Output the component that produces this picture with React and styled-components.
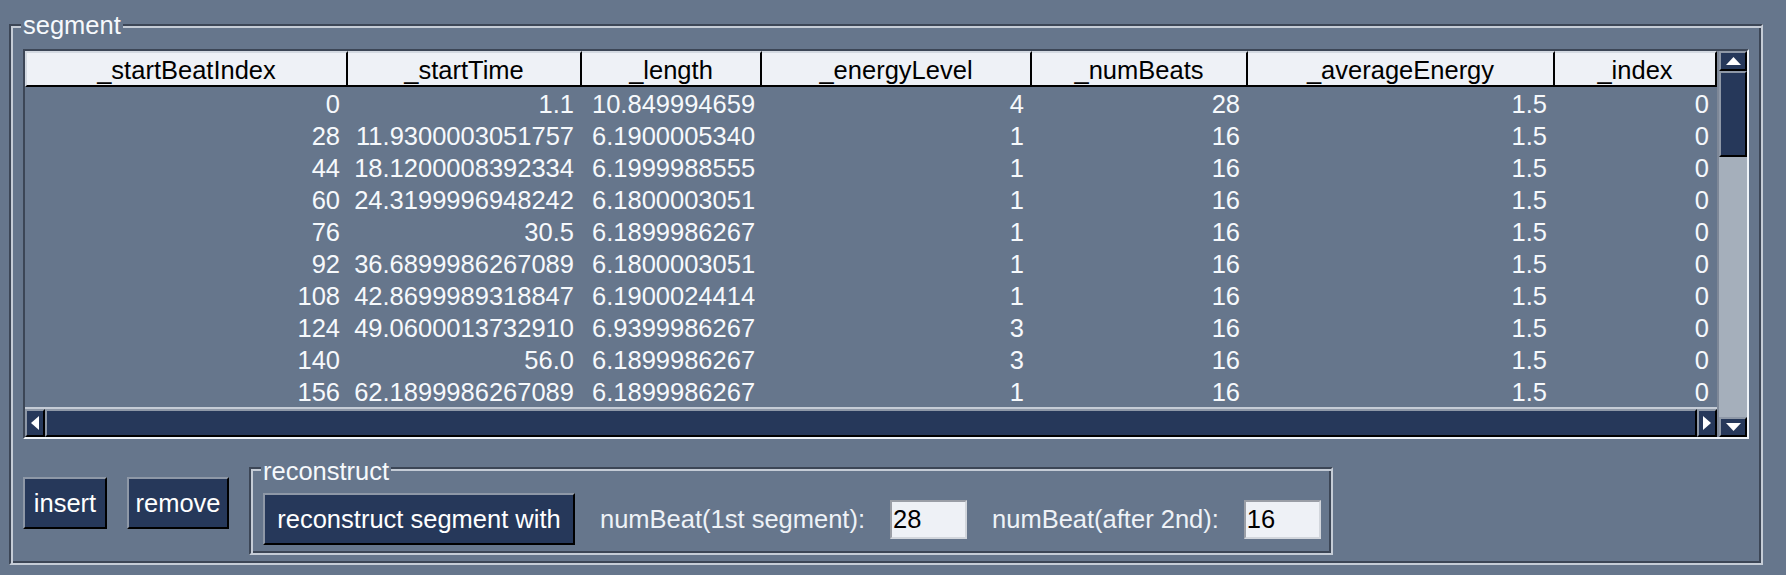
import React from "react";
import styled, { createGlobalStyle } from "styled-components";

const colors = {
  background: "#66768c",
  navy: "#26385a",
  headerBg: "#eef1f6",
  headerEdge: "#d3d9e1",
  trough: "#a5afbb",
  grooveDark: "#3c4656",
  grooveLight: "#c5ccd6",
  frameLight: "#eef3f8",
  raisedLight: "#8e98a7",
  text: "#f6f9fc",
  label: "#eef2f7",
};

const COLUMNS = "323px 234px 180px 270px 216px 307px 162px";

const headers = [
  "_startBeatIndex",
  "_startTime",
  "_length",
  "_energyLevel",
  "_numBeats",
  "_averageEnergy",
  "_index",
];

const rows = [
  ["0", "1.1", "10.8499946594238", "4", "28", "1.5", "0"],
  ["28", "11.9300003051757", "6.1900005340576", "1", "16", "1.5", "0"],
  ["44", "18.1200008392334", "6.1999988555908", "1", "16", "1.5", "0"],
  ["60", "24.3199996948242", "6.1800003051757", "1", "16", "1.5", "0"],
  ["76", "30.5", "6.1899986267089", "1", "16", "1.5", "0"],
  ["92", "36.6899986267089", "6.1800003051757", "1", "16", "1.5", "0"],
  ["108", "42.8699989318847", "6.1900024414062", "1", "16", "1.5", "0"],
  ["124", "49.0600013732910", "6.9399986267089", "3", "16", "1.5", "0"],
  ["140", "56.0", "6.1899986267089", "3", "16", "1.5", "0"],
  ["156", "62.1899986267089", "6.1899986267089", "1", "16", "1.5", "0"],
];

const GlobalStyle = createGlobalStyle`
  html, body {
    margin: 0;
    padding: 0;
    background: ${colors.background};
    overflow: hidden;
  }

  body {
    font-family: "Liberation Sans", Arial, Helvetica, sans-serif;
    font-size: 25.5px;
  }
`;

const Page = styled.div`
  width: 1786px;
  height: 575px;
  box-sizing: border-box;
  padding: 24px 23px 10px 9px;
`;

const Group = styled.div`
  position: relative;
  border: 2px solid;
  border-color: ${colors.grooveDark} ${colors.grooveLight} ${colors.grooveLight} ${colors.grooveDark};
  box-shadow: inset 2px 2px 0 ${colors.grooveLight}, inset -2px -2px 0 ${colors.grooveDark};
  padding: ${(p) => p.$padding};
`;

const Legend = styled.span`
  position: absolute;
  left: 10px;
  top: ${(p) => p.$top}px;
  padding: 0 2px;
  line-height: 30px;
  color: ${colors.text};
  background: ${colors.background};
  white-space: nowrap;
`;

const TableFrame = styled.div`
  display: grid;
  grid-template-columns: 1692px 30px;
  grid-template-rows: 358px 28px;
  border: 2px solid;
  border-color: ${colors.grooveDark} ${colors.frameLight} ${colors.frameLight} ${colors.grooveDark};
`;

const TableArea = styled.div`
  box-sizing: border-box;
  border-bottom: 2px solid ${colors.grooveLight};
  overflow: hidden;
`;

const HeaderRow = styled.div`
  display: grid;
  grid-template-columns: ${COLUMNS};
  height: 36px;
`;

const HeaderCell = styled.div`
  box-sizing: border-box;
  background: ${colors.headerBg};
  border-top: 2px solid ${colors.headerEdge};
  border-bottom: 2px solid #000;
  border-right: 2px solid #000;
  padding-top: 2px;
  line-height: 30px;
  text-align: center;
  color: #000;
  white-space: nowrap;
  overflow: hidden;

  &:first-child {
    border-left: 2px solid ${colors.headerEdge};
  }
`;

const Body = styled.div`
  height: 320px;
`;

const BodyRow = styled.div`
  display: grid;
  grid-template-columns: ${COLUMNS};
  height: 32px;
`;

const Cell = styled.div`
  box-sizing: border-box;
  padding: 2px ${(p) => (p.$clip ? "7px" : "8px")} 0 ${(p) => (p.$clip ? "10px" : "0")};
  line-height: 30px;
  text-align: ${(p) => (p.$clip ? "left" : "right")};
  color: ${colors.text};
  white-space: nowrap;
  overflow: hidden;
`;

const Clip = styled.span`
  display: block;
  overflow: hidden;
`;

const VScroll = styled.div`
  grid-column: 2;
  grid-row: 1 / span 2;
  display: flex;
  flex-direction: column;
  background: ${colors.trough};
  border-left: 2px solid #7e8898;
`;

const HScroll = styled.div`
  grid-column: 1;
  grid-row: 2;
  display: flex;
`;

const Raised = styled.div`
  box-sizing: border-box;
  display: flex;
  align-items: center;
  justify-content: center;
  background: ${colors.navy};
  border: 2px solid;
  border-color: ${colors.raisedLight} #000 #000 ${colors.raisedLight};
  flex: ${(p) => (p.$grow ? "1" : "none")};
  width: ${(p) => (p.$width ? `${p.$width}px` : "auto")};
  height: ${(p) => (p.$height ? `${p.$height}px` : "auto")};
`;

const Trough = styled.div`
  flex: 1;
`;

const BottomRow = styled.div`
  display: flex;
  align-items: flex-start;
  gap: 20px;
  margin-top: 28px;
`;

const Actions = styled.div`
  display: flex;
  gap: 20px;
  padding-top: 10px;
`;

const Button = styled.button`
  box-sizing: border-box;
  width: ${(p) => p.$width}px;
  height: 52px;
  padding: 0;
  background: ${colors.navy};
  color: #fff;
  border: 2px solid;
  border-color: ${colors.raisedLight} #000 #000 ${colors.raisedLight};
  font: inherit;
  line-height: 30px;
  text-align: center;
  white-space: nowrap;
`;

const ReconstructRow = styled.div`
  display: flex;
  align-items: center;
  gap: 25px;
`;

const Label = styled.span`
  color: ${colors.label};
  white-space: nowrap;
`;

const Entry = styled.input`
  box-sizing: border-box;
  width: 77px;
  height: 39px;
  padding: 0 0 0 1px;
  border: 2px solid;
  border-color: #9a9ea6 #d2d6dc #d2d6dc #9a9ea6;
  background: ${colors.headerBg};
  color: #000;
  font: inherit;
  outline: none;
`;

const Arrow = ({ dir }) => {
  const shapes = {
    up: { w: 15, h: 8, points: "7.5,0 15,8 0,8" },
    down: { w: 15, h: 8, points: "0,0 15,0 7.5,8" },
    left: { w: 8, h: 14, points: "8,0 8,14 0,7" },
    right: { w: 8, h: 14, points: "0,0 8,7 0,14" },
  };
  const s = shapes[dir];
  return (
    <svg width={s.w} height={s.h} viewBox={`0 0 ${s.w} ${s.h}`}>
      <polygon points={s.points} fill="#fff" />
    </svg>
  );
};

const App = () => {
  return (
    <>
      <GlobalStyle />
      <Page>
        <Group $padding="23px 12px 8px 12px">
          <Legend $top={-16}>{"segment"}</Legend>
          <TableFrame>
            <TableArea>
              <HeaderRow>
                {headers.map((h) => (
                  <HeaderCell key={h}>{h}</HeaderCell>
                ))}
              </HeaderRow>
              <Body>
                {rows.map((row) => (
                  <BodyRow key={row[0]}>
                    {row.map((value, i) =>
                      i === 2 ? (
                        <Cell key={i} $clip>
                          <Clip>{value}</Clip>
                        </Cell>
                      ) : (
                        <Cell key={i}>{value}</Cell>
                      )
                    )}
                  </BodyRow>
                ))}
              </Body>
            </TableArea>
            <VScroll>
              <Raised $height={20}>
                <Arrow dir="up" />
              </Raised>
              <Raised $height={86} />
              <Trough />
              <Raised $height={20}>
                <Arrow dir="down" />
              </Raised>
            </VScroll>
            <HScroll>
              <Raised $width={20}>
                <Arrow dir="left" />
              </Raised>
              <Raised $grow />
              <Raised $width={20}>
                <Arrow dir="right" />
              </Raised>
            </HScroll>
          </TableFrame>
          <BottomRow>
            <Actions>
              <Button $width={84}>{"insert"}</Button>
              <Button $width={102}>{"remove"}</Button>
            </Actions>
            <Group $padding="24px 10px 8px 12px">
              <Legend $top={-13}>{"reconstruct"}</Legend>
              <ReconstructRow>
                <Button $width={312}>{"reconstruct segment with"}</Button>
                <Label>{"numBeat(1st segment):"}</Label>
                <Entry defaultValue="28" />
                <Label>{"numBeat(after 2nd):"}</Label>
                <Entry defaultValue="16" />
              </ReconstructRow>
            </Group>
          </BottomRow>
        </Group>
      </Page>
    </>
  );
};

export default App;
